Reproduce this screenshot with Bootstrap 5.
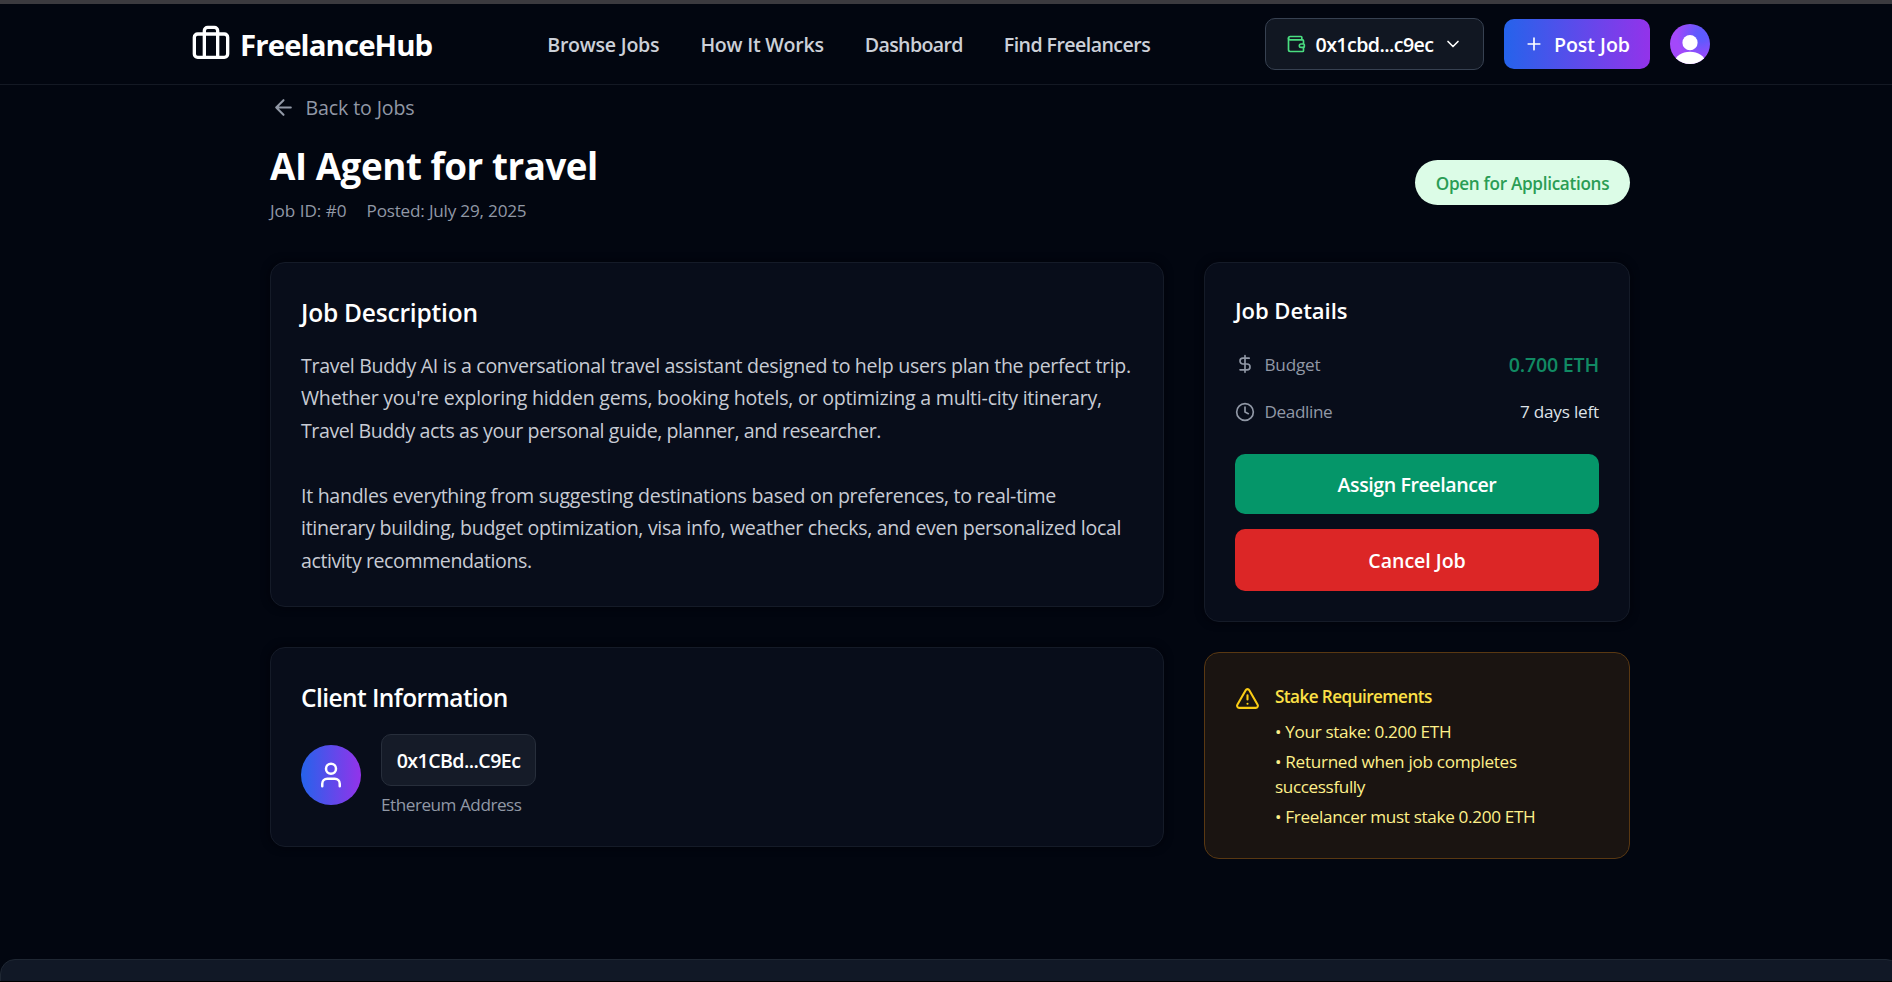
<!DOCTYPE html>
<html lang="en" data-bs-theme="dark">
<head>
<meta charset="utf-8">
<meta name="viewport" content="width=device-width, initial-scale=1">
<title>AI Agent for travel - FreelanceHub</title>
<link href="https://cdn.jsdelivr.net/npm/bootstrap@5.3.0/dist/css/bootstrap.min.css" rel="stylesheet">
<style>
  html, body { height: 982px; overflow: hidden; }
  body { background: #020610; color: #fff; font-family: "Open Sans", "Noto Sans", sans-serif; font-size: 19.6px; line-height: 30px; border-top: 4px solid #3b3a3f; border-bottom: 1px solid #000; }
  svg { display: block; flex: none; }
  .stroke { fill: none; stroke: currentColor; stroke-width: 2; stroke-linecap: round; stroke-linejoin: round; }
  .thin { font-size: 17.15px; line-height: 25px; }
  .muted { color: #9198a6; }
  .semi { font-weight: 600; }

  .site-header { height: 81px; border-bottom: 1px solid #141924; padding: 0 182px 0 190.5px; }
  .brand { gap: 9.5px; color: #fff; font-size: 29.4px; font-weight: 700; letter-spacing: -.9px; }
  .brand span { padding-top: 2px; }
  .site-nav { gap: 41px; padding-top: 2px; }
  .site-nav a { color: #ccd0d8; font-weight: 600; text-decoration: none; }
  .wallet { width: 219px; height: 52px; padding: 0 20px; border: 1px solid #374151; border-radius: 10px; background: #111722; color: #fff; }
  .wallet:hover { background: #111722; }
  .wallet .coin { color: #4ade80; }
  .post-job { width: 146px; height: 50px; padding: 0 20px; border: 0; border-radius: 10px; background: linear-gradient(90deg, #2563eb, #9333ea); color: #fff; }
  .btn { font-size: 19.6px; line-height: 30px; font-weight: 600; }
  .btn span { padding-top: 2px; }

  .page-body { width: 1360px; margin-left: 270px; padding-top: 7px; }
  .back-link { gap: 9.5px; height: 30px; width: max-content; margin-left: 1px; text-decoration: none; }
  .back-link span { padding-top: 2px; }
  .job-head { margin-top: 22px; }
  .job-title { font-size: 36.75px; line-height: 45px; font-weight: 700; letter-spacing: -.45px; margin: 0 0 9px; }
  .job-meta { gap: 20px; }
  .status-pill { height: 45px; width: 215px; border-radius: 23px; background: #dcfce7; color: #2a9d55; font-weight: 600; padding-top: 2px; margin-bottom: 2px; }

  .columns { margin-top: 39px; gap: 40px; }
  .col-main { width: 894px; gap: 40px; }
  .col-side { width: 426px; gap: 30px; }
  .panel { background: #080d1a; border: 1px solid #151b28; border-radius: 15px; padding: 32px 30px 29px; box-shadow: 0 0 8px #01030a; }
  .panel h2 { font-size: 24.5px; line-height: 35px; font-weight: 600; margin: 0 0 19.5px; }
  .panel .client-title { margin-bottom: 18.5px; }
  .side-panel { padding-top: 30px; padding-bottom: 30px; }
  .side-panel h2 { font-size: 22.05px; margin-bottom: 21px; }
  .description { color: #c7cbd4; line-height: 32.5px; }
  .description span { display: block; white-space: nowrap; }
  .description p { margin: 0 0 32.5px; }
  .description p:last-child { margin: 0; }
  .client { gap: 20px; }
  .user-dot { width: 60px; height: 60px; border-radius: 50%; background: linear-gradient(90deg, #2563eb, #9333ea); }
  .addr { width: 155px; height: 52px; border: 1px solid #272e3b; border-radius: 10px; background: #151b28; padding-top: 2px; margin-bottom: 6px; }
  .fact { height: 30px; margin-bottom: 17.5px; }
  .fact > div { gap: 9.5px; }
  .eth { color: #118a63; font-size: 19.6px; }
  .days { color: #dfe2e8; }
  .actions { margin-top: 27.5px; gap: 15px; }
  .actions .btn { border: 0; border-radius: 10px; color: #fff; height: 60px; padding-top: 8px; }
  .assign { background: #059669; }
  .actions .cancel { background: #dc2626; height: 62px; }
  .notice { background: #1a1411; border: 1px solid #593812; border-radius: 15px; padding: 31px 30px 29px; gap: 15px; color: #fef08a; }
  .notice svg { color: #facc15; margin-top: 2px; }
  .notice strong { color: #fde047; font-weight: 600; display: block; margin-bottom: 10px; }
  .notice ul { gap: 5px; }
  .notice li span { display: block; white-space: nowrap; }
  .site-footer { margin-top: 100px; width: 1901px; height: 60px; border: 1px solid #1f2733; border-radius: 15px 15px 0 0; background: #111826; }

  .t-04 { letter-spacing: -.04px; } .t-13 { letter-spacing: -.13px; } .t-20 { letter-spacing: -.2px; }
  .t-25 { letter-spacing: -.24px; } .t-30 { letter-spacing: -.3px; } .t-32 { letter-spacing: -.315px; } .t-33 { letter-spacing: -.335px; }
  .t-38 { letter-spacing: -.38px; } .t-43 { letter-spacing: -.43px; } .t-47 { letter-spacing: -.47px; }
  .t-57 { letter-spacing: -.57px; } .t-65 { letter-spacing: -.65px; } .t-77 { letter-spacing: -.77px; }
</style>
<script src="https://cdn.jsdelivr.net/npm/bootstrap@5.3.0/dist/js/bootstrap.bundle.min.js"></script>
</head>
<body>
<header class="site-header d-flex align-items-center justify-content-between">
  <a href="#" class="brand d-flex align-items-center text-decoration-none">
    <svg class="stroke" width="40" height="40" viewBox="0 0 24 24"><path d="M16 20V4a2 2 0 0 0-2-2h-4a2 2 0 0 0-2 2v16"/><rect x="2" y="6" width="20" height="14" rx="2"/></svg>
    <span>FreelanceHub</span>
  </a>
  <nav class="site-nav d-flex">
    <a href="#" class="t-25">Browse Jobs</a>
    <a href="#" class="t-25">How It Works</a>
    <a href="#" class="t-65">Dashboard</a>
    <a href="#" class="t-57">Find Freelancers</a>
  </nav>
  <div class="d-flex align-items-center gap-3">
    <button class="btn wallet d-flex align-items-center justify-content-between">
      <svg class="stroke coin" width="20" height="20" viewBox="0 0 24 24"><path d="M19 7V4a1 1 0 0 0-1-1H5a2 2 0 0 0 0 4h15a1 1 0 0 1 1 1v4h-3a2 2 0 0 0 0 4h3a1 1 0 0 0 1-1v-2a1 1 0 0 0-1-1"/><path d="M3 5v14a2 2 0 0 0 2 2h15a1 1 0 0 0 1-1v-4"/></svg>
      <span class="t-57">0x1cbd...c9ec</span>
      <svg class="stroke" width="20" height="20" viewBox="0 0 24 24"><path d="m6 9 6 6 6-6"/></svg>
    </button>
    <button class="btn post-job d-flex align-items-center justify-content-between ms-1">
      <svg class="stroke" width="20" height="20" viewBox="0 0 24 24"><path d="M5 12h14M12 5v14"/></svg>
      <span class="t-04">Post Job</span>
    </button>
    <svg class="ms-1" width="40" height="40" viewBox="0 0 40 40">
      <defs>
        <radialGradient id="halo" cx=".78" cy=".28" r=".62"><stop offset="0" stop-color="#5b5cff"/><stop offset=".25" stop-color="#6259fd"/><stop offset="1" stop-color="#a348fa"/></radialGradient>
        <clipPath id="disc"><circle cx="20" cy="20" r="20"/></clipPath>
      </defs>
      <g clip-path="url(#disc)"><rect width="40" height="40" fill="url(#halo)"/><circle cx="20" cy="18.7" r="7.6" fill="#fff"/><ellipse cx="20" cy="38" rx="15" ry="10.3" fill="#fff"/></g>
    </svg>
  </div>
</header>

<main class="page-body">
  <a href="#" class="back-link d-flex align-items-center muted">
    <svg class="stroke" width="25" height="25" viewBox="0 0 24 24"><path d="m12 19-7-7 7-7M19 12H5"/></svg>
    <span class="t-13">Back to Jobs</span>
  </a>
  <div class="job-head d-flex align-items-center justify-content-between">
    <div>
      <h1 class="job-title">AI Agent for travel</h1>
      <div class="job-meta thin muted d-flex"><span class="t-04">Job ID: #0</span><span class="t-20">Posted: July 29, 2025</span></div>
    </div>
    <div class="status-pill thin d-flex align-items-center justify-content-center t-30">Open for Applications</div>
  </div>

  <div class="columns d-flex align-items-start">
    <div class="col-main d-flex flex-column">
      <section class="panel">
        <h2 class="t-20">Job Description</h2>
        <div class="description">
          <p><span class="t-33">Travel Buddy AI is a conversational travel assistant designed to help users plan the perfect trip.</span>
            <span class="t-25">Whether you're exploring hidden gems, booking hotels, or optimizing a multi-city itinerary,</span>
            <span class="t-43">Travel Buddy acts as your personal guide, planner, and researcher.</span></p>
          <p><span class="t-30">It handles everything from suggesting destinations based on preferences, to real-time</span>
            <span class="t-32">itinerary building, budget optimization, visa info, weather checks, and even personalized local</span>
            <span class="t-43">activity recommendations.</span></p>
        </div>
      </section>
      <section class="panel">
        <h2 class="client-title t-57">Client Information</h2>
        <div class="client d-flex align-items-center">
          <div class="user-dot d-flex align-items-center justify-content-center">
            <svg class="stroke" width="30" height="30" viewBox="0 0 24 24"><path d="M19 21v-2a4 4 0 0 0-4-4H9a4 4 0 0 0-4 4v2"/><circle cx="12" cy="7" r="4"/></svg>
          </div>
          <div>
            <div class="addr semi t-57 d-flex align-items-center justify-content-center">0x1CBd...C9Ec</div>
            <div class="thin muted t-47">Ethereum Address</div>
          </div>
        </div>
      </section>
    </div>

    <div class="col-side d-flex flex-column">
      <section class="panel side-panel">
        <h2 class="t-04">Job Details</h2>
        <div class="fact thin d-flex align-items-center justify-content-between">
          <div class="d-flex align-items-center muted"><svg class="stroke" width="20" height="20" viewBox="0 0 24 24"><path d="M12 2v20M17 5H9.5a3.5 3.5 0 0 0 0 7h5a3.5 3.5 0 0 1 0 7H6"/></svg><span class="t-20">Budget</span></div>
          <span class="eth semi t-20">0.700 ETH</span>
        </div>
        <div class="fact thin d-flex align-items-center justify-content-between">
          <div class="d-flex align-items-center muted"><svg class="stroke" width="20" height="20" viewBox="0 0 24 24"><circle cx="12" cy="12" r="10"/><path d="M12 6v6l4 2"/></svg><span class="t-38">Deadline</span></div>
          <span class="days t-20">7 days left</span>
        </div>
        <div class="actions d-grid">
          <button class="btn assign"><span class="t-43">Assign Freelancer</span></button>
          <button class="btn cancel"><span class="t-04">Cancel Job</span></button>
        </div>
      </section>
      <section class="notice thin d-flex align-items-start">
        <svg class="stroke" width="25" height="25" viewBox="0 0 24 24"><path d="m21.73 18-8-14a2 2 0 0 0-3.48 0l-8 14A2 2 0 0 0 4 21h16a2 2 0 0 0 1.73-3M12 9v4M12 17h.01"/></svg>
        <div>
          <strong class="t-57">Stake Requirements</strong>
          <ul class="list-unstyled d-flex flex-column mb-0">
            <li class="t-33">• Your stake: 0.200 ETH</li>
            <li><span class="t-30">• Returned when job completes</span><span class="t-38">successfully</span></li>
            <li class="t-33">• Freelancer must stake 0.200 ETH</li>
          </ul>
        </div>
      </section>
    </div>
  </div>
</main>
<footer class="site-footer"></footer>
</body>
</html>
